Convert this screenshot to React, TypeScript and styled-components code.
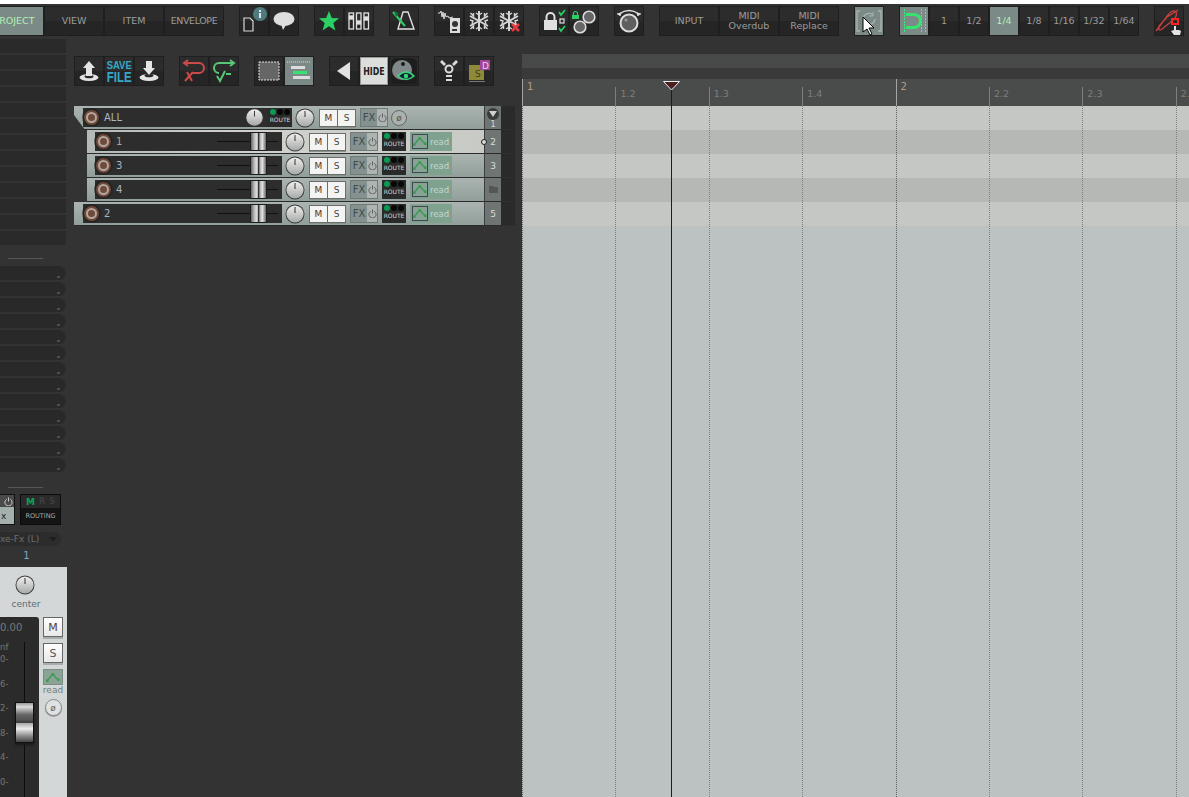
import React from "react";
import styled, { createGlobalStyle } from "styled-components";

const UI = `"DejaVu Sans", "Liberation Sans", sans-serif`;

const Global = createGlobalStyle`
  html, body { margin: 0; padding: 0; background: #333333; overflow: hidden; }
  * { box-sizing: border-box; }
`;

const Page = styled.div`
  width: 1189px; height: 797px; display: flex; flex-direction: column; overflow: hidden;
  background: #333333; font-family: ${UI}; position: relative;
`;
const TopStrip = styled.div`height: 4px; background: #ffffff; flex: none;`;
const Toolbar = styled.div`
  display: flex; gap: 15px; height: 34px; flex: none; padding-top: 2px; margin-left: -16px; width: 1300px;
`;
const Group = styled.div`display: flex; height: 30px; background: #1f1f1f; flex: none;`;
const Btn = styled.div<{ $w?: number; $active?: boolean; $tight?: boolean }>`
  width: ${p => p.$w ?? 30}px; height: 30px; display: flex; flex-direction: column; align-items: center; justify-content: center;
  border: 1px solid #1f1f1f; font-size: 9.5px; line-height: 10px; text-align: center;
  letter-spacing: ${p => (p.$tight ? "-0.4px" : "0")};
  color: ${p => (p.$active ? "#b4f0b4" : "#9c9c9c")};
  background: ${p => (p.$active ? "#7b8a87" : "linear-gradient(#2c2c2c 0 50%, #252525 50% 100%)")};
  position: relative;
`;
const Body = styled.div`display: flex; flex: 1; min-height: 0;`;
const Left = styled.div`width: 522px; flex: none; display: flex;`;
const MixCol = styled.div`width: 67px; flex: none; display: flex; flex-direction: column;`;
const SquareRows = styled.div`display: flex; flex-direction: column; gap: 2px; width: 66px; margin-top: 1px;`;
const SquareRow = styled.div`height: 14px; background: #2a2a2a;`;
const Sep = styled.div<{ $top: number; $bottom: number }>`
  height: 1px; width: 35px; background: #575757; margin: ${p => p.$top}px 0 ${p => p.$bottom}px 8px; flex: none;
`;
const RoundRows = styled.div`display: flex; flex-direction: column; gap: 2px; width: 66px;`;
const RoundRow = styled.div`
  height: 14px; background: #292929; border-radius: 0 7px 7px 0; display: flex; align-items: flex-end; justify-content: flex-end; padding: 0 6px 2px 0;
`;
const Corner = styled.div`width: 3px; height: 2px; background: #4d4d4d;`;
const MixHead = styled.div`display: flex; gap: 5px; height: 31px; width: 61px; flex: none;`;
const FxBox = styled.div`width: 15px; height: 31px; background: #111; padding: 1px 1px 1px 0; display: flex; flex-direction: column;`;
const FxTop = styled.div`height: 12px; background: #4a4a4a; display: flex; align-items: center; justify-content: flex-end; padding-right: 1px;`;
const FxBottom = styled.div`flex: 1; background: #a4b0ae; color: #222; font-size: 9px; display: flex; align-items: center; padding-left: 1px;`;
const RouteBox = styled.div`width: 41px; height: 31px; background: #141414; border: 1px solid #0c0c0c; display: flex; flex-direction: column;`;
const RouteTop = styled.div`height: 13px; background: #2a2a2a; display: flex; justify-content: space-around; padding: 0 3px; align-items: center; font-size: 8px; font-weight: bold; color: #3d3d3d;`;
const RouteM = styled.span`color: #0fa058; font-size: 9px;`;
const RouteLabel = styled.div`flex: 1; color: #a9a9a9; font-size: 6.5px; display: flex; align-items: center; justify-content: center;`;
const InputPill = styled.div`
  height: 14px; margin-top: 7px; width: 61px; flex: none; background: #2c2c2c; border-radius: 0 7px 7px 0; color: #6e6e6e; font-size: 9px; display: flex; align-items: center; justify-content: space-between; padding-right: 4px; white-space: nowrap;
`;
const Tri = styled.div`width: 0; height: 0; border-left: 4px solid transparent; border-right: 4px solid transparent; border-top: 5px solid #1e1e1e;`;
const ChanNum = styled.div`color: #7da6c9; font-size: 10px; text-align: center; width: 53px; height: 18px; line-height: 14px; margin-top: 3px; flex: none;`;
const Strip = styled.div`flex: 1; width: 67px; background: #d3d7d7; display: flex; flex-direction: column; align-items: flex-start; padding-top: 8px; min-height: 0; overflow: hidden;`;
const StripKnobWrap = styled.div`margin-left: 15px; height: 20px; flex: none;`;
const Center = styled.div`color: #5c6a78; font-size: 9px; line-height: 11px; margin-top: 4px; width: 52px; text-align: center; flex: none;`;
const StripMain = styled.div`display: flex; gap: 4px; margin-top: 7px; flex: 1; width: 67px; align-items: flex-start;`;
const FaderWell = styled.div`width: 39px; height: 190px; background: #2b2b2b; border-radius: 0 3px 0 0; position: relative; display: flex; flex: none;`;
const Scale = styled.div`display: flex; flex-direction: column; width: 16px; padding-top: 5px; overflow: visible;`;
const PeakVal = styled.div`color: #7a7a7a; font-size: 10px; line-height: 11px; height: 20px; white-space: nowrap;`;
const ScaleItem = styled.div<{ $first?: boolean }>`height: ${p => (p.$first ? 12 : 24.6)}px; line-height: 10px; color: #777; font-size: 8.5px; flex: none;`;
const FaderLine = styled.div`position: absolute; left: 24px; top: 25px; bottom: 0; width: 1px; background: #0c0c0c;`;
const FaderCap = styled.div`
  position: absolute; left: 15px; top: 85px; width: 19px; height: 41px; border: 1px solid #111; box-shadow: 0 2px 2px #1a1a1a;
  background: linear-gradient(#999 0, #ddd 10%, #666 30%, #4d4d4d 47%, #111 49%, #aaa 52%, #eee 66%, #888 85%, #444 100%);
`;
const StripBtns = styled.div`display: flex; flex-direction: column; align-items: center; width: 20px; flex: none;`;
const StripBtn = styled.div<{ $s?: boolean }>`
  width: 20px; height: 20px; border: 1px solid #666; background: linear-gradient(#fff, #e8e8e8); color: ${p => (p.$s ? "#555" : "#5a3a30")}; font-size: 11px;
  display: flex; align-items: center; justify-content: center; box-shadow: 0 2px 0 #a8acac; margin-bottom: 6px;
`;
const ReadBtn = styled.div`width: 20px; height: 16px; background: #8ba394; border: 1px solid #7c8c84; display: flex; align-items: center; justify-content: center;`;
const ReadLabel = styled.div`color: #6f7c7c; font-size: 9px; line-height: 10px;`;
const PhaseDot = styled.div`
  width: 17px; height: 17px; border-radius: 50%; border: 1px solid #888; background: #dfe2e2; color: #666; font-size: 9px; display: flex; align-items: center; justify-content: center; margin-top: 4px; box-shadow: 0 1px 0 #999;
`;

const TcpCol = styled.div`flex: 1; display: flex; flex-direction: column; padding-top: 18px; padding-left: 7px;`;
const Toolbar2 = styled.div`display: flex; gap: 15px; height: 30px; flex: none;`;
const Tracks = styled.div`display: flex; flex-direction: column; margin-top: 20px; width: 441px;`;
const TrackRow = styled.div`height: 24px; display: flex; width: 441px;`;
const TrackBody = styled.div<{ $indent: number; $sel?: boolean; $master?: boolean }>`
  flex: 1; display: flex; align-items: center; height: 24px; margin-left: ${p => p.$indent}px; padding-left: ${p => (p.$indent ? 8 : 9)}px; position: relative;
  background: ${p => (p.$sel ? "linear-gradient(90deg,#b4b9b5,#d0d2ce 40%, #c8cac6)" : "linear-gradient(#abb4b0,#919e9a)")};
  border-bottom: 1px solid #2a2a2a;
  ${p => p.$master && "clip-path: polygon(0 0, 100% 0, 100% 100%, 11px 100%, 0 9px);"}
`;
const NameSlot = styled.div<{ $w: number; $sel?: boolean }>`
  width: ${p => p.$w}px; height: 19px; background: #2d2d2d; display: flex; align-items: center; flex: none; padding-left: 21px; font-size: 10px; color: ${p => (p.$sel ? "#b9a28c" : "#a7b6c8")}; position: relative;
`;
const Rec = styled.div`
  position: absolute; left: 0; top: 1px; width: 17px; height: 17px; border-radius: 50%; background: #6e4a3a; border: 1px solid #1e1e1e; box-shadow: 0 0 0 1px #22222299; display: flex; align-items: center; justify-content: center;
  &::after { content: ""; width: 7px; height: 7px; border-radius: 50%; border: 2px solid #b6a79e; }
`;
const FaderSlot = styled.div`position: absolute; right: 4px; top: 9px; width: 61px; height: 1px; background: #111;`;
const FaderThumb = styled.div`
  position: absolute; left: 34px; top: -8px; width: 15px; height: 17px; box-shadow: 0 0 0 1px #1c1c1c;
  background: linear-gradient(90deg,#666,#c4c4c4 25%,#e2e2e2 42%,#333 48%,#333 54%,#aaa 58%,#e2e2e2 76%,#666);
`;
const MasterKnob = styled.div`margin-left: auto; margin-right: 4px; display: flex;`;
const KnobSvg = styled.svg`flex: none; display: block;`;
const MiniRoute = styled.div`width: 24px; height: 19px; background: #2a2a2a; flex: none; display: flex; flex-direction: column; align-items: center; padding-top: 1px;`;
const Dots = styled.div`display: flex; gap: 1px;`;
const Dot = styled.div<{ $on?: boolean }>`width: 6px; height: 6px; border-radius: 50%; background: ${p => (p.$on ? "#0a9a50" : "#080808")};`;
const RouteText = styled.div`font-size: 6px; color: #d8d8d8; line-height: 10px; white-space: nowrap;`;
const MS = styled.div`display: flex; flex: none; border: 1px solid #6a6f6c; height: 18px; box-shadow: 0 1px 0 #8a908c;`;
const MSBtn = styled.div<{ $s?: boolean }>`
  width: ${p => (p.$s ? 17 : 18)}px; height: 16px; background: #f4f4f2; color: ${p => (p.$s ? "#444" : "#5a3020")}; font-size: 9px; display: flex; align-items: center; justify-content: center; border-right: ${p => (p.$s ? 0 : "1px solid #6a6f6c")};
`;
const Fx = styled.div`display: flex; flex: none; height: 19px; width: 28px; border: 1px solid #6f7a78;`;
const FxL = styled.div`width: 16px; background: #84918f; color: #3f4a4a; font-size: 10px; display: flex; align-items: center; justify-content: center;`;
const FxR = styled.div`flex: 1; background: #adb4b1; display: flex; align-items: center; justify-content: center;`;
const Read = styled.div`width: 42px; height: 19px; background: #7fa28f; flex: none; display: flex; align-items: center; gap: 2px; color: #c6d8cc; font-size: 8.5px; padding-left: 2px;`;
const ReadIcon = styled.div`width: 16px; height: 15px; border: 1px solid #445; background: #85a493; display: flex; align-items: center; justify-content: center;`;
const NumCell = styled.div`
  width: 17px; height: 24px; background: #6f7572; color: #d7dcd9; font-size: 9px; display: flex; align-items: center; justify-content: center; flex: none; border-left: 1px solid #3a3d3b; border-bottom: 1px solid #2a2a2a; position: relative;
`;
const EndCell = styled.div`width: 14px; height: 24px; background: #2a2a2a; flex: none; border-bottom: 1px solid #2f2f2f;`;
const GapFill = styled.div<{ $w: number }>`width: ${p => p.$w}px; flex: none;`;
const HandleDot = styled.div`position: absolute; right: -3px; top: 9px; width: 6px; height: 6px; border-radius: 50%; border: 1px solid #222; background: #d8dad6; z-index: 1;`;
const FolderTop = styled.div`
  width: 12px; height: 12px; border-radius: 50%; background: #3a3a3a; display: flex; align-items: center; justify-content: center; position: absolute; top: 2px; left: 2px;
`;
const FolderNum = styled.span`position: absolute; bottom: 0; line-height: 8px; font-size: 8px;`;
const PhaseSmall = styled.div`width: 16px; height: 16px; border-radius: 50%; border: 1px solid #666; background: #aab2af; color: #555; font-size: 9px; display: flex; align-items: center; justify-content: center; flex: none;`;

const Arrange = styled.div`flex: 1; display: flex; flex-direction: column; padding-top: 16px; position: relative; min-width: 0;`;
const BandTop = styled.div`height: 14px; background: #484a49; flex: none;`;
const BandMid = styled.div`height: 11px; background: #3a3a3a; flex: none;`;
const Ruler = styled.div`height: 27px; background: #4a4c4b; display: flex; flex: none; width: 760px;`;
const RulerCell = styled.div<{ $bar?: boolean }>`
  width: 93.4px; flex: none; border-left: 1px solid ${p => (p.$bar ? "#a5a5a5" : "#7e7e7e")}; margin-top: ${p => (p.$bar ? 0 : 8)}px; height: ${p => (p.$bar ? 27 : 19)}px;
  color: ${p => (p.$bar ? "#b59a86" : "#7d7d7d")}; font-size: ${p => (p.$bar ? 10 : 9.5)}px; padding: ${p => (p.$bar ? "2px 0 0 4px" : "1px 0 0 4px")}; line-height: 12px;
`;
const Lanes = styled.div`flex: 1; position: relative; background: #bcc1c2; overflow: hidden;`;
const LaneRow = styled.div<{ $d?: boolean }>`height: 24px; background: ${p => (p.$d ? "#b6b8b5" : "#c5c7c5")};`;
const Grid = styled.div`position: absolute; inset: 0; display: flex; width: 760px;`;
const GridCell = styled.div<{ $bar?: boolean }>`
  width: 93.4px; flex: none; border-left: 1px dotted ${p => (p.$bar ? "#5f6262" : "#7d8080")};
`;
const Playhead = styled.div`position: absolute; left: 149px; top: 44px; bottom: 0; width: 1px; background: #321414; z-index: 2;`;
const PlayHat = styled.svg`position: absolute; left: 141px; top: 43px; z-index: 3;`;
const CursorSvg = styled.svg`position: absolute; left: 862px; top: 16px; z-index: 5;`;

const SdLetters = styled.span`color: #3a3a14; font-size: 9px; position: absolute; left: 10px; top: 12px;`;
const DLetter = styled.span`color: #e8cfe8; font-size: 9px; position: absolute; left: 17px; top: 4px; line-height: 10px;`;
const SaveFile = styled.div`color: #37a8c8; font-family: "Liberation Sans", sans-serif; font-weight: bold; text-align: center;`;
const SaveLine = styled.div`font-size: 11px; line-height: 11px; transform: scaleX(.86);`;
const FileLine = styled.div`font-size: 14px; line-height: 12px; transform: scaleX(.82);`;
const HideBtn = styled.div`
  width: 28px; height: 28px; margin: 1px; background: #dcdedc; display: flex; align-items: center; justify-content: center; border: 1px solid #999;
`;
const HideText = styled.span`color: #222; font-size: 11px; font-weight: bold; transform: scaleX(.72); white-space: nowrap;`;

const Knob = ({ s = 20 }: { s?: number }) => (
  <KnobSvg width={s} height={s} viewBox="0 0 20 20">
    <defs>
      <linearGradient id="kg" x1="0" y1="0" x2="0" y2="1">
        <stop offset="0" stopColor="#f0f0ee" />
        <stop offset="1" stopColor="#a5a9a7" />
      </linearGradient>
    </defs>
    <circle cx="10" cy="10" r="9.5" fill="#3a3a3a" />
    <circle cx="10" cy="10" r="8.6" fill="url(#kg)" />
    <line x1="10" y1="3" x2="10" y2="9" stroke="#333" strokeWidth="1" />
  </KnobSvg>
);

const EnvIcon = ({ c = "#3f9a55" }: { c?: string }) => (
  <svg width="14" height="9" viewBox="0 0 14 9">
    <path d="M1 8 L5 3 L7 1 L10 5 L13 7" fill="none" stroke={c} strokeWidth="1.5" />
    <rect x="0" y="6.5" width="2.5" height="2.5" fill={c} />
    <rect x="5.5" y="0" width="2.5" height="2.5" fill={c} />
    <rect x="11" y="5.5" width="2.5" height="2.5" fill={c} />
  </svg>
);

const Power = ({ c = "#555" }: { c?: string }) => (
  <svg width="9" height="9" viewBox="0 0 10 10">
    <path d="M3 2.5 A4 4 0 1 0 7 2.5" fill="none" stroke={c} strokeWidth="1" />
    <line x1="5" y1="0.5" x2="5" y2="5" stroke={c} strokeWidth="1" />
  </svg>
);

const Ico = {
  doc: <svg width="28" height="28" viewBox="0 0 28 28"><path d="M4 11h6l3 3v10H4z" fill="none" stroke="#d8d8d8" strokeWidth="1.2" /><circle cx="20" cy="7" r="7" fill="#4e7a80" /><rect x="19" y="6" width="2" height="5" fill="#dfe6e6" /><rect x="19" y="3" width="2" height="2" fill="#dfe6e6" /></svg>,
  bubble: <svg width="24" height="20" viewBox="0 0 24 20"><ellipse cx="12" cy="8" rx="10.5" ry="7" fill="#dedede" /><path d="M9 13 L11 19 L14 14z" fill="#dedede" /></svg>,
  star: <svg width="22" height="22" viewBox="0 0 22 22"><path d="M11 1 L13.8 8 L21 8.3 L15.3 13 L17.4 20.5 L11 16.2 L4.6 20.5 L6.7 13 L1 8.3 L8.2 8z" fill="#2ad063" /></svg>,
  mixer: <svg width="22" height="20" viewBox="0 0 22 20" fill="none" stroke="#e0e0e0" strokeWidth="1.3"><rect x="1" y="2" width="4.5" height="16" /><rect x="8.5" y="2" width="4.5" height="16" /><rect x="16" y="2" width="4.5" height="16" /><rect x="1.5" y="5" width="3.5" height="3" fill="#e0e0e0" /><rect x="9" y="10" width="3.5" height="3" fill="#e0e0e0" /><rect x="16.5" y="6" width="3.5" height="3" fill="#e0e0e0" /></svg>,
  metro: <svg width="24" height="24" viewBox="0 0 24 24"><path d="M11 3h5l6 17H6z" fill="none" stroke="#e0e0e0" strokeWidth="1.4" /><path d="M1 3 L13 17" stroke="#2ad063" strokeWidth="2" /><path d="M2 2 L7 4 L4 8z" fill="#1f6a3a" /></svg>,
  wavedisk: <svg width="28" height="28" viewBox="0 0 28 28"><path d="M3 6h2l1-2 1 6 1-5 1 7 1-6 1 4 2-1 1 2 4-1" fill="none" stroke="#ddd" strokeWidth="1" /><rect x="15" y="11" width="10" height="15" fill="#ddd" /><circle cx="20" cy="17" r="3" fill="#333" /><rect x="17" y="22" width="5" height="2" fill="#333" /></svg>,
  flake: (x?: boolean) => (
    <svg width="24" height="24" viewBox="0 0 24 24" stroke="#d6d6d6" strokeWidth="2" fill="none">
      <path d="M12 2v20M3 7l18 10M21 7L3 17" />
      <path d="M9 4l3 2 3-2M9 20l3-2 3 2M3 11l3 1-1 3M21 11l-3 1 1 3M3.5 4l3 3v-3M20.5 20l-3-3v3M3.5 20l3-3v3M20.5 4l-3 3v-3" strokeWidth="1.4" />
      {x && <path d="M15 15l7 7M22 15l-7 7" stroke="#e0393e" strokeWidth="2.6" />}
    </svg>
  ),
  lock: <svg width="28" height="28" viewBox="0 0 28 28"><path d="M6.5 13V10a4 4 0 0 1 8 0v3" fill="none" stroke="#e0e0e0" strokeWidth="2" /><rect x="4" y="13" width="13" height="10" fill="#e0e0e0" /><path d="M19 5l2 3 4-5M19 21l2 3 4-5" fill="none" stroke="#2ad063" strokeWidth="1.7" /><rect x="20" y="12" width="4" height="4" fill="none" stroke="#ddd" strokeWidth="1.2" /></svg>,
  knobs: <svg width="28" height="28" viewBox="0 0 28 28"><path d="M3.5 8V6.5a2 2 0 0 1 4 0V8" fill="none" stroke="#2ad063" strokeWidth="1.2" /><rect x="2" y="8" width="7" height="4" fill="#2ad063" /><circle cx="19" cy="10" r="5.8" fill="#666" stroke="#ddd" strokeWidth="1.6" /><circle cx="10" cy="20" r="5.8" fill="#666" stroke="#ddd" strokeWidth="1.6" /></svg>,
  bigKnob: <svg width="26" height="26" viewBox="0 0 26 26"><path d="M3 6 Q13 -1 23 6" fill="none" stroke="#ddd" strokeWidth="1.5" /><path d="M1 6l4-1-1 3M25 6l-4-1 1 3" fill="#ddd" stroke="#ddd" /><circle cx="13" cy="15" r="8.5" fill="#5f5f5f" stroke="#ddd" strokeWidth="2" /><circle cx="10" cy="12" r="1.5" fill="#999" /></svg>,
  loop: <svg width="26" height="24" viewBox="0 0 26 24" fill="none" stroke="#a8b2b0" strokeWidth="1.4"><path d="M4 2H1v20h3M22 2h3v20h-3" /><path d="M7 10a6 6 0 0 1 10-4M19 10a6 6 0 0 1-10 4" /><path d="M17 3v4h-4M9 17v-4h4" strokeWidth="1" /></svg>,
  snap: <svg width="28" height="28" viewBox="0 0 28 28" fill="none"><path d="M4.5 2v24" stroke="#3fe87a" strokeWidth="1" strokeDasharray="2 1" /><path d="M21.5 2v24M25.5 2v24" stroke="#a7b8b0" strokeWidth="1" strokeDasharray="2 1" /><path d="M6 7.5h8a6.5 6.5 0 0 1 0 13H6" stroke="#36e36e" strokeWidth="3" /></svg>,
  link: <svg width="30" height="28" viewBox="0 0 30 28" fill="none"><path d="M2 24 L14 8 Q18 2 22 5 Q24 9 18 14 L8 22 Q4 25 5 19 L13 10 L24 3" stroke="#c8413f" strokeWidth="1.3" /><rect x="18" y="12" width="6" height="5" stroke="#ff2222" strokeWidth="2" fill="none" /><path d="M20 19h2v4h3l2 1-1 4h-6l-3-4 3-1z" fill="#e4e4e4" /></svg>,
  up: <svg width="20" height="22" viewBox="0 0 20 22"><ellipse cx="10" cy="17.5" rx="9.5" ry="3.5" fill="#e4e4e4" /><ellipse cx="10" cy="16.5" rx="4.5" ry="1.8" fill="#2a2a2a" /><path d="M10 1 L16 8 H13 V16 H7 V8 H4z" fill="#e4e4e4" /></svg>,
  down: <svg width="20" height="22" viewBox="0 0 20 22"><ellipse cx="10" cy="17.5" rx="9.5" ry="3.5" fill="#e4e4e4" /><ellipse cx="10" cy="15.5" rx="4.5" ry="1.8" fill="#2a2a2a" /><path d="M10 15 L16 8 H13 V1 H7 V8 H4z" fill="#e4e4e4" /></svg>,
  undoX: <svg width="24" height="24" viewBox="0 0 24 24" fill="none" stroke="#cc4a4a" strokeWidth="2"><path d="M3 4h14a4 4 0 0 1 0 10H11" /><path d="M6 1L2 4l4 3" /><path d="M5 13l5 9M11 13L3 22" /></svg>,
  redoCheck: <svg width="24" height="24" viewBox="0 0 24 24" fill="none" stroke="#58c878" strokeWidth="2"><path d="M21 4H7a4 4 0 0 0 0 10" /><path d="M18 1l4 3-4 3" /><path d="M5 17l3 5 5-10M14 15h5" /></svg>,
  dashRect: <svg width="22" height="20" viewBox="0 0 22 20"><rect x="1" y="1" width="20" height="18" fill="#666" stroke="#e0e0e0" strokeDasharray="2 1" /></svg>,
  rowsIcon: <svg width="24" height="20" viewBox="0 0 24 20"><path d="M0 1h24" stroke="#e0e0e0" strokeDasharray="1 1" /><rect x="4" y="5" width="14" height="3" fill="#dcdcdc" /><rect x="6" y="10" width="14" height="3" fill="#36e36e" /><rect x="6" y="15" width="17" height="3" fill="#dcdcdc" /></svg>,
  left: <svg width="16" height="18" viewBox="0 0 16 18"><path d="M14 0v18L1 9z" fill="#e2e2e2" /></svg>,
  eye: <svg width="26" height="26" viewBox="0 0 26 26"><rect width="26" height="26" rx="5" fill="#1d1d1d" /><circle cx="11" cy="12" r="10" fill="#80888a" /><circle cx="12" cy="6" r="2" fill="#1a1a1a" /><path d="M7 18 Q15 10 23 18 Q15 25 7 18z" fill="#123" stroke="#3ad67c" strokeWidth="1.5" /><circle cx="15" cy="18" r="2.2" fill="#3ad67c" /></svg>,
  fw: <svg width="20" height="24" viewBox="0 0 20 24" fill="#dcdcdc"><circle cx="10" cy="10" r="3.5" fill="none" stroke="#dcdcdc" strokeWidth="2" /><path d="M1 3l2-2 4 4-2 2zM19 3l-2-2-4 4 2 2z" /><rect x="7" y="16" width="6" height="2" /><rect x="7" y="20" width="6" height="2" /></svg>,
  sd: <svg width="24" height="24" viewBox="0 0 24 24"><rect x="2" y="6" width="15" height="15" fill="#8f8a3a" /><rect x="2" y="22" width="16" height="1" fill="#777" /><rect x="13" y="1" width="10" height="10" fill="#a0449a" /></svg>,
};

const TrackControls = () => (
  <>
    <GapFill $w={3} />
    <Knob />
    <GapFill $w={4} />
    <MS><MSBtn>M</MSBtn><MSBtn $s>S</MSBtn></MS>
    <GapFill $w={4} />
    <Fx><FxL>FX</FxL><FxR><Power /></FxR></Fx>
    <GapFill $w={4} />
    <MiniRoute>
      <Dots><Dot $on /><Dot /><Dot /></Dots>
      <RouteText>ROUTE</RouteText>
    </MiniRoute>
    <GapFill $w={4} />
    <Read><ReadIcon><EnvIcon /></ReadIcon>read</Read>
  </>
);

const Track = ({ name, num, indent, sel }: { name: string; num: string; indent: number; sel?: boolean }) => (
  <TrackRow>
    <TrackBody $indent={indent} $sel={sel}>
      <NameSlot $w={indent ? 187 : 199} $sel={sel}>
        <Rec />
        {name}
        <FaderSlot><FaderThumb /></FaderSlot>
      </NameSlot>
      <TrackControls />
      {sel && <HandleDot />}
    </TrackBody>
    <NumCell>{num === "f" ? <svg width="9" height="7" viewBox="0 0 9 7"><path d="M0 0h4l1 1h4v6H0z" fill="#555" /></svg> : num}</NumCell>
    <EndCell />
  </TrackRow>
);

export default function App() {
  const tracks = [
    { name: "1", num: "2", indent: 13, sel: true },
    { name: "3", num: "3", indent: 13 },
    { name: "4", num: "f", indent: 13 },
    { name: "2", num: "5", indent: 0 },
  ];
  const bars = ["1", "1.2", "1.3", "1.4", "2", "2.2", "2.3", "2.4"];
  return (
    <Page>
      <Global />
      <TopStrip />
      <Toolbar>
        <Group>
          <Btn $w={60} $active>PROJECT</Btn>
          <Btn $w={60}>VIEW</Btn>
          <Btn $w={60}>ITEM</Btn>
          <Btn $w={60} $tight>ENVELOPE</Btn>
        </Group>
        <Group><Btn>{Ico.doc}</Btn><Btn>{Ico.bubble}</Btn></Group>
        <Group><Btn>{Ico.star}</Btn><Btn>{Ico.mixer}</Btn></Group>
        <Group><Btn>{Ico.metro}</Btn></Group>
        <Group><Btn>{Ico.wavedisk}</Btn><Btn>{Ico.flake()}</Btn><Btn>{Ico.flake(true)}</Btn></Group>
        <Group><Btn>{Ico.lock}</Btn><Btn>{Ico.knobs}</Btn></Group>
        <Group><Btn>{Ico.bigKnob}</Btn></Group>
        <Group>
          <Btn $w={60}>INPUT</Btn>
          <Btn $w={60}>MIDI<br />Overdub</Btn>
          <Btn $w={60}>MIDI<br />Replace</Btn>
        </Group>
        <Group><Btn $active>{Ico.loop}</Btn></Group>
        <Group>
          <Btn $active>{Ico.snap}</Btn>
          {["1", "1/2"].map(t => <Btn key={t}>{t}</Btn>)}
          <Btn $active>1/4</Btn>
          {["1/8", "1/16", "1/32", "1/64"].map(t => <Btn key={t}>{t}</Btn>)}
        </Group>
        <Group><Btn>{Ico.link}</Btn></Group>
      </Toolbar>
      <Body>
        <Left>
          <MixCol>
            <SquareRows>
              {Array.from({ length: 13 }, (_, i) => <SquareRow key={i} />)}
            </SquareRows>
            <Sep $top={13} $bottom={7} />
            <RoundRows>
              {Array.from({ length: 13 }, (_, i) => <RoundRow key={i}><Corner /></RoundRow>)}
            </RoundRows>
            <Sep $top={15} $bottom={6} />
            <MixHead>
              <FxBox>
                <FxTop><Power c="#ddd" /></FxTop>
                <FxBottom>x</FxBottom>
              </FxBox>
              <RouteBox>
                <RouteTop><RouteM>M</RouteM><span>R</span><span>S</span></RouteTop>
                <RouteLabel>ROUTING</RouteLabel>
              </RouteBox>
            </MixHead>
            <InputPill>xe-Fx (L)<Tri /></InputPill>
            <ChanNum>1</ChanNum>
            <Strip>
              <StripKnobWrap><Knob /></StripKnobWrap>
              <Center>center</Center>
              <StripMain>
                <FaderWell>
                  <Scale>
                    <PeakVal>0.00</PeakVal>
                    {["nf", "0-", "6-", "2-", "8-", "4-", "0-"].map((t, i) => <ScaleItem key={i} $first={i === 0}>{t}</ScaleItem>)}
                  </Scale>
                  <FaderLine />
                  <FaderCap />
                </FaderWell>
                <StripBtns>
                  <StripBtn>M</StripBtn>
                  <StripBtn $s>S</StripBtn>
                  <ReadBtn><EnvIcon /></ReadBtn>
                  <ReadLabel>read</ReadLabel>
                  <PhaseDot>ø</PhaseDot>
                </StripBtns>
              </StripMain>
            </Strip>
          </MixCol>
          <TcpCol>
            <Toolbar2>
              <Group>
                <Btn>{Ico.up}</Btn>
                <Btn><SaveFile><SaveLine>SAVE</SaveLine><FileLine>FILE</FileLine></SaveFile></Btn>
                <Btn>{Ico.down}</Btn>
              </Group>
              <Group><Btn>{Ico.undoX}</Btn><Btn>{Ico.redoCheck}</Btn></Group>
              <Group><Btn>{Ico.dashRect}</Btn><Btn $active>{Ico.rowsIcon}</Btn></Group>
              <Group><Btn>{Ico.left}</Btn><HideBtn><HideText>HIDE</HideText></HideBtn><Btn>{Ico.eye}</Btn></Group>
              <Group><Btn>{Ico.fw}</Btn><Btn>{Ico.sd}<SdLetters>S</SdLetters><DLetter>D</DLetter></Btn></Group>
            </Toolbar2>
            <Tracks>
              <TrackRow>
                <TrackBody $indent={0} $master>
                  <NameSlot $w={185}>
                    <Rec />ALL
                    <MasterKnob><Knob s={19} /></MasterKnob>
                  </NameSlot>
                  <MiniRoute><Dots><Dot $on /><Dot /><Dot /></Dots><RouteText>ROUTE</RouteText></MiniRoute>
                  <GapFill $w={3} />
                  <Knob />
                  <GapFill $w={4} />
                  <MS><MSBtn>M</MSBtn><MSBtn $s>S</MSBtn></MS>
                  <GapFill $w={4} />
                  <Fx><FxL>FX</FxL><FxR><Power /></FxR></Fx>
                  <GapFill $w={3} />
                  <PhaseSmall>ø</PhaseSmall>
                </TrackBody>
                <NumCell>
                  <FolderTop><svg width="8" height="6" viewBox="0 0 8 6"><path d="M0 0h8L4 6z" fill="#cfd2d0" /></svg></FolderTop>
                  <FolderNum>1</FolderNum>
                </NumCell>
                <EndCell />
              </TrackRow>
              {tracks.map(t => <Track key={t.name} {...t} />)}
            </Tracks>
          </TcpCol>
        </Left>
        <Arrange>
          <BandTop />
          <BandMid />
          <Ruler>
            {bars.map((b, i) => <RulerCell key={b} $bar={i % 4 === 0}>{b}</RulerCell>)}
          </Ruler>
          <Lanes>
            {[false, true, false, true, false].map((d, i) => <LaneRow key={i} $d={d} />)}
            <Grid>{bars.map((b, i) => <GridCell key={b} $bar={i % 4 === 0} />)}</Grid>
          </Lanes>
          <Playhead />
          <PlayHat width="17" height="10" viewBox="0 0 17 10"><path d="M0.5 0.5h16L8.5 9z" fill="#4a1f1f" stroke="#eee" /></PlayHat>
        </Arrange>
      </Body>
      <CursorSvg width="14" height="20" viewBox="0 0 14 20"><path d="M1 1v15l4-3 3 6 2-1-3-6h5z" fill="#fff" stroke="#000" /></CursorSvg>
    </Page>
  );
}
